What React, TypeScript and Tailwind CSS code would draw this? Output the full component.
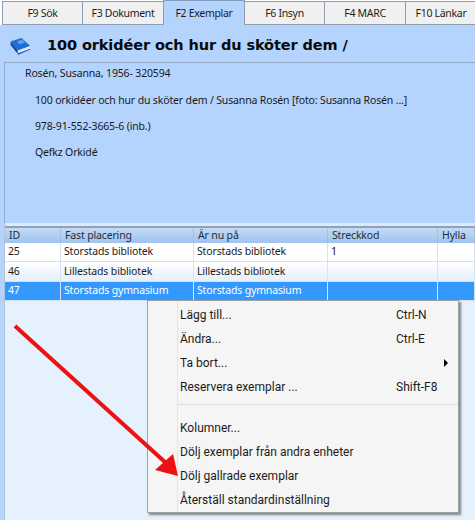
const tabs = [
  { label: "F9 Sök", w: "w-[81px]" },
  { label: "F3 Dokument", w: "w-[82px]" },
  { label: "F2 Exemplar", w: "w-[82px]", active: true },
  { label: "F6 Insyn", w: "w-[81px]" },
  { label: "F4 MARC", w: "w-[82px]" },
  { label: "F10 Länkar", w: "w-[72px]" },
];

const cols = ["w-[56px]", "w-[133px]", "w-[134px]", "w-[110px]", "flex-1"];

const rows = [
  { cells: ["25", "Storstads bibliotek", "Storstads bibliotek", "1", ""], cls: "bg-white text-[#1a1a1a] h-[19px]" },
  { cells: ["46", "Lillestads bibliotek", "Lillestads bibliotek", "", ""], cls: "bg-gradient-to-b from-white to-[#e3eefc] text-[#1a1a1a] h-[20px]" },
  { cells: ["47", "Storstads gymnasium", "Storstads gymnasium", "", ""], cls: "bg-[#3399ff] text-white h-[19px]" },
];

const menuTop = [
  { label: "Lägg till...", key: "Ctrl-N" },
  { label: "Ändra...", key: "Ctrl-E" },
  { label: "Ta bort...", key: "", arrow: true },
  { label: "Reservera exemplar ...", key: "Shift-F8" },
];
const menuBottom = ["Kolumner...", "Dölj exemplar från andra enheter", "Dölj gallrade exemplar", "Återställ standardinställning"];

function MenuRow({ label, k, arrow }: { label: string; k?: string; arrow?: boolean }) {
  return (
    <div className="flex items-center h-[24px] pl-[32px] text-[12px] text-[#1c1c1c] font-['Roboto',sans-serif]">
      <span className="w-[216px] whitespace-nowrap">{label}</span>
      <span className="w-[48px] whitespace-nowrap">{k}</span>
      {arrow && <span className="w-0 h-0 border-y-[4px] border-y-transparent border-l-[4px] border-l-black" />}
    </div>
  );
}

export default function App() {
  return (
    <div className="relative w-[475px] h-[520px] overflow-hidden bg-[#b4d3fd] font-['Noto_Sans',sans-serif] flex flex-col">
      <div className="flex items-end h-[25px] pl-[2px] bg-white">
        {tabs.map((t) => (
          <div
            key={t.label}
            className={`${t.w} shrink-0 flex items-center justify-center pt-[2px] border border-[#8e9db0] text-[10.5px] tracking-[-0.3px] text-[#1d1d1d] whitespace-nowrap ${
              t.active ? "h-[25px] bg-[#b4d3fd] border-b-0 border-t-[#7f9db9] -ml-px" : "h-[24px] bg-[#f0f0f0] -ml-px first:ml-0"
            }`}
          >
            {t.label}
          </div>
        ))}
      </div>

      <div className="flex items-center h-[37px] pl-[9px] pt-[4px] shrink-0">
        <svg width="23" height="18" viewBox="0 0 24 20" className="shrink-0">
          <path d="M1 5 L13 1 L23 10 L9 15 Z" fill="#1c6fd6" />
          <path d="M1 5 L9 15 L9 19 L1 9 Z" fill="#0d4a9e" />
          <path d="M9 15 L23 10 L23 13 L9 19 Z" fill="#dfe9f5" />
          <path d="M9 18 L23 13 L23 14 L9 20 Z" fill="#1a5fb4" />
          <path d="M8 5 L14 3 L17 6 L11 8 Z" fill="#5da3ee" />
        </svg>
        <span className="ml-[15px] text-[14.5px] font-bold text-[#0a0a0a] font-['DejaVu_Sans',sans-serif] tracking-[-0.1px] whitespace-nowrap">
          100 orkidéer och hur du sköter dem /
        </span>
      </div>

      <div className="ml-[4px] h-[161px] shrink-0 border-t border-l border-[#93a9c4] pl-[20px] text-[10.5px] tracking-[-0.15px] text-[#1a1a1a] flex flex-col">
        <div className="h-[20px] leading-[20px] whitespace-nowrap">Rosén, Susanna, 1956- 320594</div>
        <div className="pl-[10px] mt-[7px] flex flex-col gap-[6px]">
          <div className="h-[20px] leading-[20px] whitespace-nowrap">100 orkidéer och hur du sköter dem / Susanna Rosén [foto: Susanna Rosén ...]</div>
          <div className="h-[20px] leading-[20px] whitespace-nowrap">978-91-552-3665-6 (inb.)</div>
          <div className="h-[20px] leading-[20px] whitespace-nowrap">Qefkz Orkidé</div>
        </div>
      </div>

      <div className="flex-1 ml-[4px] flex flex-col bg-[#e6f1fe] border-l border-[#b0c4dc]">
        <div className="h-[3px] bg-[#dceafc] shrink-0" />
        <div className="flex h-[17px] shrink-0 border-t-2 border-[#8ea2b8] bg-gradient-to-b from-[#c3daf5] to-[#9fc3ef] text-[10.5px] tracking-[-0.15px] text-[#1f2d40]">
          {["ID", "Fast placering", "Är nu på", "Streckkod", "Hylla"].map((h, i) => (
            <div key={h} className={`${cols[i]} shrink-0 pl-[4px] leading-[15px] border-r border-[#a9c0dc] whitespace-nowrap`}>{h}</div>
          ))}
        </div>
        {rows.map((r) => (
          <div key={r.cells[0]} className={`flex shrink-0 ${r.cls} text-[10.5px] tracking-[-0.15px]`}>
            {r.cells.map((c, i) => (
              <div key={i} className={`${cols[i]} shrink-0 pl-[3px] flex items-center border-r border-[#d5e2f2] border-b whitespace-nowrap`}>{c}</div>
            ))}
          </div>
        ))}
      </div>

      <div className="absolute left-[147px] top-[300px] w-[312px] h-[213px] bg-[#f5f5f5] border border-[#a0a0a0] shadow-[2px_2px_2px_rgba(60,60,60,0.6)] pt-[2px]">
        <div className="absolute left-[29px] top-0 bottom-0 w-px bg-[#e6e6e6]" />
        {menuTop.map((m) => (
          <MenuRow key={m.label} label={m.label} k={m.key} arrow={m.arrow} />
        ))}
        <div className="ml-[30px] mt-[5px] mb-[11px] h-px bg-[#dcdcdc]" />
        {menuBottom.map((m) => (
          <MenuRow key={m} label={m} />
        ))}
      </div>

      <svg className="absolute left-0 top-0 pointer-events-none" width="475" height="520">
        <line x1="15" y1="326" x2="166" y2="463" stroke="#ee1111" strokeWidth="4" />
        <polygon points="173,454 178,476 155,470" fill="#ee1111" />
      </svg>
    </div>
  );
}
